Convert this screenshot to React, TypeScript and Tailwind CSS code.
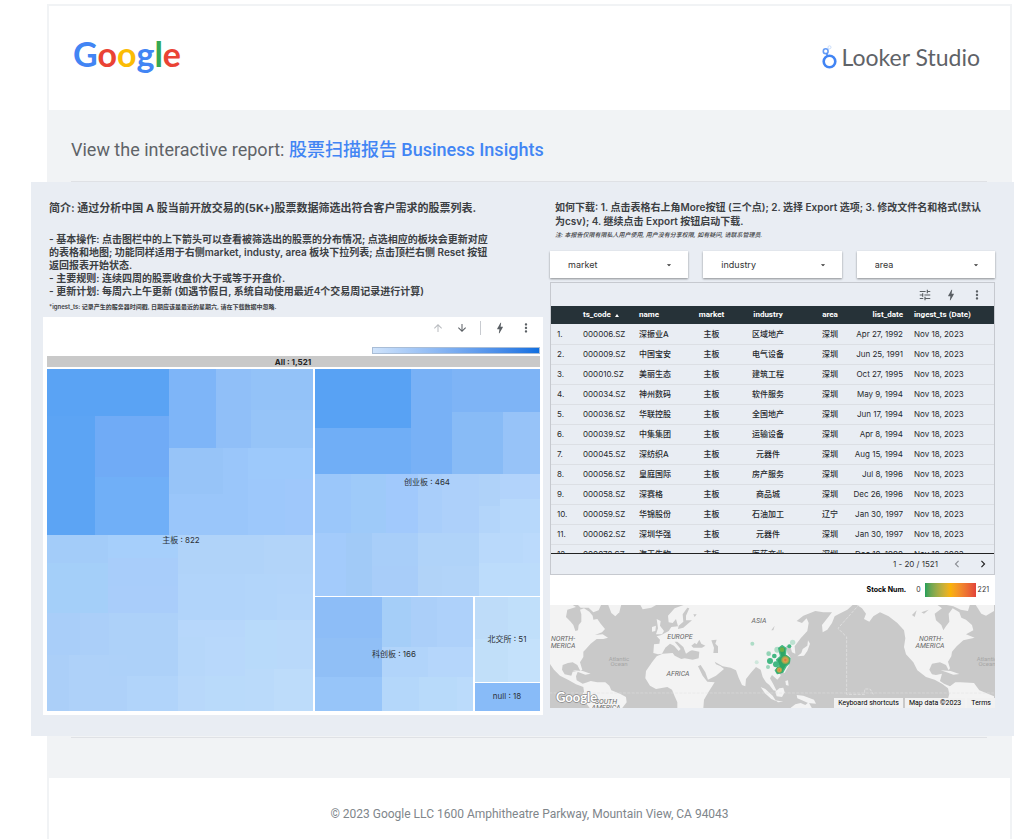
import React from 'react';
import {
  MdArrowDownward,
  MdArrowDropDown,
  MdArrowUpward,
  MdBolt,
  MdChevronLeft,
  MdChevronRight,
  MdMoreVert,
  MdTune,
} from 'react-icons/md';

type Cell = [number, number, number, number, string];

// x1, y1, x2, y2, fill
const CELLS: Cell[] = [
  [0, 13, 122, 60, '#5aa3f4'],
  [0, 60, 48, 179, '#5ca4f4'],
  [48, 60, 122, 121, '#70abf6'],
  [48, 121, 122, 179, '#70aff7'],
  [122, 13, 169, 92, '#7eb5f8'],
  [169, 13, 204, 92, '#90bff8'],
  [204, 13, 266, 54, '#93c2f8'],
  [204, 54, 266, 92, '#96c4f8'],
  [122, 92, 176, 138, '#97c4f8'],
  [176, 92, 201, 138, '#9ac6fa'],
  [122, 138, 201, 179, '#9ac6fa'],
  [201, 92, 266, 123, '#9dc9fb'],
  [201, 123, 238, 179, '#9dc8fb'],
  [238, 123, 266, 179, '#9fc8fb'],
  [0, 179, 61, 207, '#a3ccf9'],
  [0, 207, 61, 257, '#a4cff9'],
  [61, 179, 131, 202, '#a6cffb'],
  [61, 202, 131, 230, '#a8cdfa'],
  [61, 230, 131, 257, '#a9cdfa'],
  [0, 257, 33, 299, '#a9cef9'],
  [33, 257, 62, 299, '#abcff9'],
  [62, 257, 131, 304, '#add1f9'],
  [0, 299, 22, 355, '#abcff8'],
  [22, 299, 80, 355, '#aed1f9'],
  [62, 304, 131, 320, '#add1f9'],
  [80, 320, 131, 355, '#b1d4fa'],
  [131, 179, 217, 218, '#b0d3f9'],
  [217, 179, 266, 218, '#b2d4f9'],
  [131, 218, 198, 264, '#b1d4fa'],
  [198, 218, 230, 264, '#b2d5fa'],
  [230, 218, 266, 238, '#b3d5fa'],
  [230, 238, 266, 264, '#b4d6fa'],
  [131, 264, 198, 281, '#b7d7fb'],
  [131, 281, 158, 320, '#b6d7fa'],
  [158, 281, 198, 320, '#b8d8fb'],
  [198, 264, 230, 313, '#b8dafa'],
  [230, 264, 266, 313, '#b9d9fa'],
  [131, 320, 158, 355, '#b8d8fa'],
  [158, 320, 198, 355, '#b9dafa'],
  [198, 313, 227, 355, '#badafa'],
  [227, 313, 266, 355, '#bddcfa'],

  [268, 13, 364, 72, '#58a2f4'],
  [268, 72, 364, 118, '#70aef6'],
  [364, 13, 405, 118, '#78b1f6'],
  [405, 13, 493, 56, '#7eb4f6'],
  [405, 56, 456, 118, '#88bbf6'],
  [456, 56, 493, 118, '#97c3f8'],
  [268, 118, 304, 177, '#9bc7fa'],
  [304, 118, 339, 177, '#9ecaf9'],
  [339, 118, 371, 177, '#a1c9fc'],
  [371, 118, 395, 177, '#a9cefa'],
  [395, 118, 432, 177, '#add0fa'],
  [432, 118, 453, 150, '#afd2f9'],
  [453, 118, 493, 143, '#b2d3fb'],
  [432, 150, 453, 177, '#b3d5fa'],
  [453, 143, 493, 177, '#b7d8fb'],
  [268, 177, 299, 240, '#a3cbfb'],
  [299, 177, 325, 240, '#a1caf7'],
  [325, 177, 371, 210, '#a8cef9'],
  [325, 210, 371, 240, '#a8cdf9'],
  [371, 177, 432, 210, '#b0d3f9'],
  [371, 210, 395, 240, '#b1d3f8'],
  [395, 210, 432, 240, '#b2d4f9'],
  [432, 177, 476, 207, '#b9d9fb'],
  [476, 177, 493, 207, '#bbdafc'],
  [432, 207, 493, 240, '#bcdcfb'],

  [268, 241, 335, 282, '#8dbdf7'],
  [268, 282, 335, 321, '#90bff6'],
  [268, 321, 335, 355, '#97c5f9'],
  [335, 241, 364, 291, '#a5cef8'],
  [364, 241, 390, 291, '#abcff9'],
  [390, 241, 426, 291, '#aed1fa'],
  [335, 291, 381, 321, '#b1d4fa'],
  [335, 321, 372, 355, '#b4d7fa'],
  [381, 291, 426, 321, '#b5d6fb'],
  [372, 321, 410, 355, '#b8dafa'],
  [410, 321, 426, 355, '#bbdbfb'],

  [428, 241, 461, 283, '#bedcf9'],
  [461, 241, 493, 283, '#c0dffa'],
  [428, 283, 461, 326, '#c1dff9'],
  [461, 283, 493, 326, '#c4e1fb'],
  [428, 327, 493, 355, '#88bbf8'],
];

const CELL_LABELS: [number, number, string][] = [
  [134, 187, '主板 : 822'],
  [380, 129, '创业板 : 464'],
  [347, 301, '科创板 : 166'],
  [460, 286, '北交所 : 51'],
  [460, 343, 'null : 18'],
];

const ROWS: [string, string, string, string, string][] = [
  ['000006.SZ', '深振业A', '区域地产', '深圳', 'Apr 27, 1992'],
  ['000009.SZ', '中国宝安', '电气设备', '深圳', 'Jun 25, 1991'],
  ['000010.SZ', '美丽生态', '建筑工程', '深圳', 'Oct 27, 1995'],
  ['000034.SZ', '神州数码', '软件服务', '深圳', 'May 9, 1994'],
  ['000036.SZ', '华联控股', '全国地产', '深圳', 'Jun 17, 1994'],
  ['000039.SZ', '中集集团', '运输设备', '深圳', 'Apr 8, 1994'],
  ['000045.SZ', '深纺织A', '元器件', '深圳', 'Aug 15, 1994'],
  ['000056.SZ', '皇庭国际', '房产服务', '深圳', 'Jul 8, 1996'],
  ['000058.SZ', '深赛格', '商品城', '深圳', 'Dec 26, 1996'],
  ['000059.SZ', '华锦股份', '石油加工', '辽宁', 'Jan 30, 1997'],
  ['000062.SZ', '深圳华强', '元器件', '深圳', 'Jan 30, 1997'],
  ['000078.SZ', '海王生物', '医药商业', '深圳', 'Dec 18, 1998'],
];

function GoogleLogo() {
  return (
    <div aria-label="Google" className="pb-2 font-['Lato',sans-serif] text-[34px] leading-10 font-bold">
      <span className="text-[#4285f4]">G</span>
      <span className="text-[#ea4335]">o</span>
      <span className="text-[#fbbc05]">o</span>
      <span className="text-[#4285f4]">g</span>
      <span className="text-[#34a853]">l</span>
      <span className="text-[#ea4335]">e</span>
    </div>
  );
}

function LookerLogo() {
  return (
    <div className="flex items-center gap-1 pb-0.5">
      <svg viewBox="0 0 16 24" className="h-6 w-4" fill="none">
        <circle cx="7.5" cy="16.5" r="5.8" stroke="#4285f4" strokeWidth="2.6" />
        <circle cx="3.7" cy="6.2" r="2.4" stroke="#669df6" strokeWidth="1.6" />
        <path d="M4.6 8.4 5.6 11" stroke="#4285f4" strokeWidth="1.4" />
        <circle cx="7.5" cy="2.3" r="1.5" stroke="#c9ddfb" strokeWidth="1" />
      </svg>
      <span className="font-['Lato',sans-serif] text-[23px] leading-8 text-[#5f6368]">Looker Studio</span>
    </div>
  );
}

function Treemap() {
  return (
    <svg viewBox="0 0 493 355" className="mt-0.5 w-full" role="img">
      <rect width="493" height="11" fill="#c9c9c9" />
      {CELLS.map(([x1, y1, x2, y2, fill], i) => (
        <rect key={i} x={x1} y={y1} width={x2 - x1} height={y2 - y1} fill={fill} />
      ))}
      <text
        x="246"
        y="9"
        textAnchor="middle"
        className="fill-[#222] font-['Inter','Noto_Sans_CJK_SC',sans-serif] text-[8px] font-bold"
      >
        All : 1,521
      </text>
      {CELL_LABELS.map(([x, y, label]) => (
        <text
          key={label}
          x={x}
          y={y}
          textAnchor="middle"
          className="fill-[#2b3036] font-['Inter','Noto_Sans_CJK_SC',sans-serif] text-[8px]"
        >
          {label}
        </text>
      ))}
    </svg>
  );
}

function WorldMap() {
  return (
    <svg viewBox="0 0 445 103" preserveAspectRatio="xMidYMid slice" className="h-[103px] w-full" role="img">
      <defs>
        <radialGradient id="hot">
          <stop offset="0" stopColor="#e0654a" />
          <stop offset="0.4" stopColor="#d9a34a" />
          <stop offset="0.7" stopColor="#9aa84e" />
          <stop offset="1" stopColor="#2fa566" />
        </radialGradient>
      </defs>
      <rect width="445" height="103" fill="#c9c9c9" />
      <g transform="translate(-10 -30) scale(0.33333)">
        <g fill="#f3f3f3">
          <path d="M28 88H95L108 96 82 104 78 126 92 140 100 150 106 168 114 166 116 150 124 140 124 118 120 104 132 100 148 110 158 122 160 134 172 132 182 146 195 162 186 172 165 180 188 178 204 188 190 192 170 192 152 206 138 222 130 230 130 246 120 262 127 285 121 288 112 270 98 262 84 264 68 270 66 284 74 298 94 302 98 290 114 288 108 304 110 316 128 326 142 322 152 318 172 322 196 322 208 332 214 346 240 356 258 366 260 382 246 400H150L136 382 122 366 132 350 130 336 108 328 84 314 60 302 42 284 28 264Z" />
          <path d="M112 88H184L176 106 160 112 146 98 122 98Z" />
          <path d="M204 88H244L238 112 226 124 214 114Z" />
          <path d="M300 88H352L334 98 308 103Z" />
          <path d="M98 286 128 288 152 296 136 299 116 292Z" />
          <path d="M350 132 362 138 360 152 372 168 366 178 348 178 354 160Z" />
          <path d="M336 156 348 152 346 168 336 170Z" />
          <path d="M436 88 404 100 384 122 386 142 398 144 408 132 414 154 394 156 386 168 364 180 350 184 360 194 358 206 342 208 340 234 354 238 366 236 376 218 390 206 402 212 416 228 422 222 404 200 412 200 430 216 438 236 450 228 456 226 478 230 476 250 458 254 434 250 424 252 404 242 398 234 368 236 350 244 336 262 318 288 316 310 330 332 348 342 382 336 396 344 404 364 412 382 412 400H490L492 374 506 350 524 322 502 320 488 302 474 274 482 270 496 292 504 314 528 302 552 282 542 274 528 268 524 260 548 274 572 278 588 286 596 308 606 330 616 334 618 312 634 292 648 276 662 284 668 306 678 322 688 330 700 346 710 348 700 328 690 310 696 300 712 314 722 302 718 290 734 294 746 272 752 248 742 234 738 214 750 210 756 232 766 236 764 214 782 190 802 168 806 144 800 130 786 144 770 138 790 122 826 108 850 112 876 112 862 130 846 150 848 172 862 164 876 144 884 124 898 116 922 104 940 88Z" />
          <path d="M772 244 784 234 788 222 802 212 804 196 810 206 802 228 792 242Z" />
          <path d="M662 336 676 342 698 362 708 378 694 372 674 354Z" />
          <path d="M706 376 730 380 714 382Z" />
          <path d="M706 350 718 340 730 338 734 352 726 366 710 364Z" />
          <path d="M736 318 744 316 746 332 738 330Z" />
          <path d="M770 360 790 362 822 374 828 386 804 384 786 376 772 370Z" />
          <path d="M766 388 782 384 796 390 806 382 816 400H750Z" />
          <path d="M948 88 966 100 978 116 972 132 988 140 1000 124 1020 112 1046 124 1072 144 1092 166 1096 190 1092 216 1098 238 1120 262 1132 286 1158 306 1184 314 1206 326 1224 340 1228 356 1222 378 1250 400H1362V364L1318 346 1302 324 1262 322 1246 322 1230 334 1212 326 1200 318 1206 296 1188 300 1176 298 1168 284 1176 266 1200 262 1218 270 1226 286 1230 280 1224 260 1234 244 1236 230 1250 214 1270 196 1304 188 1278 178 1300 166 1296 150 1278 134 1264 128 1258 112 1238 100 1226 116 1228 140 1218 154 1210 166 1204 150 1188 136 1184 116 1206 100 1190 88Z" />
          <path d="M1210 88H1290L1284 108 1262 104 1240 94Z" />
          <path d="M1306 88H1362V108L1338 122 1324 116Z" />
          <path d="M1202 286 1232 288 1258 297 1240 299 1220 292Z" />
        </g>
        <g fill="#c9c9c9">
          <path d="M454 212 464 204 470 208 478 194 484 206 496 212 486 218 460 218Z" />
          <path d="M514 196 530 194 526 206 534 214 534 234 520 234 522 218Z" />
          <path d="M416 152 430 140 428 118 442 98 448 100 438 122 438 136 456 136 442 148 430 158 414 162Z" />
          <path d="M1116 120 1130 106 1124 126ZM1144 112 1166 104 1152 116ZM694 166 704 152 700 166ZM460 118 470 118 464 126Z" />
        </g>
        <g fill="none" stroke="#e2e2e2" strokeWidth="2.4" strokeDasharray="9 4">
          <path d="M28 354H1362" strokeOpacity=".6" />
          <path d="M958 88 894 160 920 186V358H974V342H990L1000 358" />
        </g>
        <g fill="#43b883">
          <circle cx="637" cy="206" r="6" opacity=".4" />
          <circle cx="650" cy="262" r="6" opacity=".2" />
          <circle cx="686" cy="236" r="7" opacity=".55" />
          <circle cx="690" cy="258" r="9" />
          <circle cx="703" cy="243" r="7" />
          <circle cx="684" cy="276" r="6" opacity=".5" />
          <circle cx="708" cy="268" r="9" />
          <circle cx="748" cy="214" r="6" />
          <circle cx="758" cy="202" r="8" opacity=".3" />
          <circle cx="712" cy="224" r="9" opacity=".4" />
        </g>
        <path
          d="M716 220 726 212 738 220 736 240 750 250 748 264 738 274 728 292 712 296 706 286 718 274 710 254 722 244Z"
          fill="#2fa566"
          stroke="#43b883"
          strokeWidth="4"
          strokeLinejoin="round"
        />
        <circle cx="736" cy="255" r="14" fill="url(#hot)" />
        <circle cx="718" cy="285" r="10" fill="url(#hot)" />
        <circle cx="726" cy="224" r="7" fill="#6fb04a" />
      </g>
      <g
        className="fill-[#666] font-['Roboto',sans-serif] text-[7px] italic"
        textAnchor="middle"
        stroke="#f5f5f5"
        strokeWidth="1"
        paintOrder="stroke"
      >
        <text x="13" y="36">NORTH-</text>
        <text x="13" y="43">MERICA</text>
        <text x="130" y="34">EUROPE</text>
        <text x="209" y="18">ASIA</text>
        <text x="128" y="71">AFRICA</text>
        <text x="56" y="99">SOUTH</text>
        <text x="56" y="105">AMERICA</text>
        <text x="381" y="36">NORTH-</text>
        <text x="380" y="43">AMERICA</text>
      </g>
      <g className="fill-[#a6a6a6] font-['Roboto',sans-serif] text-[6px]" textAnchor="middle">
        <text x="69" y="56">Atlantic</text>
        <text x="69" y="61">Ocean</text>
        <text x="437" y="56">Atlantic</text>
        <text x="437" y="61">Ocean</text>
      </g>
      <text
        x="6"
        y="97"
        className="fill-white font-['Lato',sans-serif] text-[13px] font-bold"
        stroke="#8a8a8a"
        strokeWidth="1.4"
        paintOrder="stroke"
      >
        Google
      </text>
    </svg>
  );
}

function Filter({ name }: { name: string }) {
  return (
    <label className="relative block bg-white shadow-[0_1px_2px_rgba(0,0,0,0.4)]">
      <select
        aria-label={name}
        className="block h-[27px] w-full appearance-none bg-transparent pr-6 pl-[18px] text-[9px] text-[#333] outline-none"
      >
        <option>{name}</option>
      </select>
      <MdArrowDropDown className="pointer-events-none absolute top-[9px] right-3.5 size-2.5 text-[#333]" />
    </label>
  );
}

function StockTable() {
  return (
    <section className="mt-1 border border-[#c6c9cf]">
      <div className="flex h-[23px] items-center justify-end gap-3 pr-2.5 text-[#5a5f64]">
        <button aria-label="Optional metrics"><MdTune className="size-3.5" /></button>
        <button aria-label="Explore"><MdBolt className="size-3.5" /></button>
        <button aria-label="More"><MdMoreVert className="size-3.5" /></button>
      </div>
      <div className="h-[248px] overflow-hidden border-b border-[#222]">
        <table className="w-full table-fixed border-collapse text-[8px] leading-3 whitespace-nowrap">
          <colgroup>
            <col className="w-8" />
            <col className="w-14" />
            <col className="w-[55px]" />
            <col className="w-[35px]" />
            <col className="w-[78px]" />
            <col className="w-[46px]" />
            <col className="w-[50px]" />
            <col />
          </colgroup>
          <thead className="bg-[#263238] font-['Roboto',sans-serif] text-white">
            <tr className="h-[18px]">
              <th />
              <th className="text-left font-bold">
                <span className="inline-flex items-center gap-1">
                  ts_code
                  <svg viewBox="0 0 4 3" className="h-[3px] w-1"><path d="M0 3 2 0 4 3Z" fill="white" /></svg>
                </span>
              </th>
              <th className="text-left font-bold">name</th>
              <th className="text-center font-bold">market</th>
              <th className="text-center font-bold">industry</th>
              <th className="text-center font-bold">area</th>
              <th className="text-right font-bold">list_date</th>
              <th className="pl-[11px] text-left font-bold">ingest_ts (Date)</th>
            </tr>
          </thead>
          <tbody className="text-[#26292d]">
            {ROWS.map(([code, name, industry, area, date], i) => (
              <tr key={code} className="h-5 border-b border-[#dcdfe4]">
                <td className="pl-1.5">{i + 1}.</td>
                <td>{code}</td>
                <td className="font-medium">{name}</td>
                <td className="text-center font-medium">主板</td>
                <td className="text-center font-medium">{industry}</td>
                <td className="text-center font-medium">{area}</td>
                <td className="text-right">{date}</td>
                <td className="pl-[11px]">Nov 18, 2023</td>
              </tr>
            ))}
          </tbody>
        </table>
      </div>
      <div className="flex h-5 items-center justify-end gap-3 pr-1 text-[8px] text-[#333]">
        <span>1 - 20 / 1521</span>
        <button aria-label="Previous page" className="text-[#8b8f94]"><MdChevronLeft className="size-3.5" /></button>
        <button aria-label="Next page" className="text-[#222]"><MdChevronRight className="size-3.5" /></button>
      </div>
    </section>
  );
}

function MapPanel() {
  return (
    <section className="bg-white">
      <div className="flex h-[30px] items-center justify-end pr-1.5 text-[7px] text-[#333]">
        <span className="mr-2.5 font-bold text-black">Stock Num.</span>
        <span className="mr-1">0</span>
        <span className="mr-0.5 h-3.5 w-[51px] bg-linear-to-r from-[#1fa05a] via-[#f9b208] to-[#e2433a]" />
        <span>221</span>
      </div>
      <div className="relative">
        <WorldMap />
        <div className="absolute right-0 bottom-0 flex h-2.5 items-center gap-0.5 font-['Roboto',sans-serif] text-[7px] leading-[10px] text-black">
          <button className="bg-[#f1f1f1] px-1">Keyboard shortcuts</button>
          <span className="bg-[#f1f1f1] px-1">Map data ©2023</span>
          <a href="#terms" className="bg-[#f1f1f1] px-1">Terms</a>
        </div>
      </div>
    </section>
  );
}

function Report() {
  return (
    <article className="-mr-1 -ml-[18px] grid grid-cols-[500fr_445fr] items-start gap-x-[7px] bg-[#e9edf3] pr-[19px] pb-[21px] pl-3 font-['Inter','Noto_Sans_CJK_SC',sans-serif] text-[#3c4043]">
      <div>
        <div className="pt-[18px] pb-1 pl-1.5 whitespace-nowrap">
          <h1 className="text-[11px] leading-4 font-bold">
            简介: 通过分析中国 A 股当前开放交易的(5K+)股票数据筛选出符合客户需求的股票列表.
          </h1>
          <div className="mt-[17px] text-[10px] leading-[13px] font-semibold">
            <p>- 基本操作: 点击图栏中的上下箭头可以查看被筛选出的股票的分布情况; 点选相应的板块会更新对应</p>
            <p>的表格和地图; 功能同样适用于右侧market, industy, area 板块下拉列表; 点击顶栏右侧 Reset 按钮</p>
            <p>返回报表开始状态.</p>
            <p>- 主要规则: 连续四周的股票收盘价大于或等于开盘价.</p>
            <p>- 更新计划: 每周六上午更新 (如遇节假日, 系统自动使用最近4个交易周记录进行计算)</p>
          </div>
          <p className="mt-[3px] text-[6px] leading-3 font-semibold">
            *ignest_ts: 记录产生的服务器时间戳, 日期应该是最近的星期六, 请在下载数据中忽略.
          </p>
        </div>
        <section className="bg-white pr-[3px] pb-1 pl-1">
          <div className="flex h-[22px] items-center justify-end gap-3 pr-[7px] text-[#5a5f64]">
            <button aria-label="Drill up" className="text-[#b9bcc0]"><MdArrowUpward className="size-3" /></button>
            <button aria-label="Drill down"><MdArrowDownward className="size-3" /></button>
            <span className="h-3.5 w-px bg-[#c8cbd0]" />
            <button aria-label="Explore"><MdBolt className="size-3.5" /></button>
            <button aria-label="More"><MdMoreVert className="size-3.5" /></button>
          </div>
          <div className="mt-2 ml-auto h-[7px] w-[168px] border border-[#a9bdd6] bg-linear-to-r from-[#cfe3fb] to-[#0d6fe0]" />
          <Treemap />
        </section>
      </div>
      <div>
        <div className="pt-[18px] pl-[5px] text-[10px] leading-[14px] font-semibold whitespace-nowrap">
          <p>如何下载: 1. 点击表格右上角More按钮 (三个点); 2. 选择 Export 选项; 3. 修改文件名和格式(默认</p>
          <p>为csv); 4. 继续点击 Export 按钮启动下载.</p>
          <p className="mt-0.5 text-[6px] leading-[10px] font-medium italic">
            注: 本报告仅限有限私人用户使用, 用户没有分享权限, 如有疑问, 请联系管理员.
          </p>
        </div>
        <div className="mt-[11px] grid grid-cols-3 gap-[15px]">
          <Filter name="market" />
          <Filter name="industry" />
          <Filter name="area" />
        </div>
        <StockTable />
        <MapPanel />
      </div>
    </article>
  );
}

export default function App() {
  return (
    <div className="flex min-h-screen flex-col bg-white pt-1 pr-3 pl-[47px] font-['Roboto','Noto_Sans_CJK_SC',sans-serif]">
      <div className="flex grow flex-col bg-[#f1f3f5] px-0.5 pt-0.5">
        <header className="flex h-[104px] items-center justify-between bg-white pr-[30px] pl-6">
          <GoogleLogo />
          <LookerLogo />
        </header>
        <main>
          <p className="px-[22px] pt-[26px] pb-[17px] text-lg leading-7 text-[#5f6368]">
            View the interactive report:{' '}
            <a href="#report" className="font-medium text-[#4285f4]">股票扫描报告 Business Insights</a>
          </p>
          <hr className="mr-[23px] ml-[22px] border-[#dfe1e5]" />
          <Report />
          <hr className="mt-px mr-[23px] ml-[22px] border-[#dfe1e5]" />
        </main>
        <footer className="mt-10 grow bg-white pt-7 pb-4 text-center text-xs leading-4 text-[#80868b]">
          © 2023 Google LLC 1600 Amphitheatre Parkway, Mountain View, CA 94043
        </footer>
      </div>
    </div>
  );
}
